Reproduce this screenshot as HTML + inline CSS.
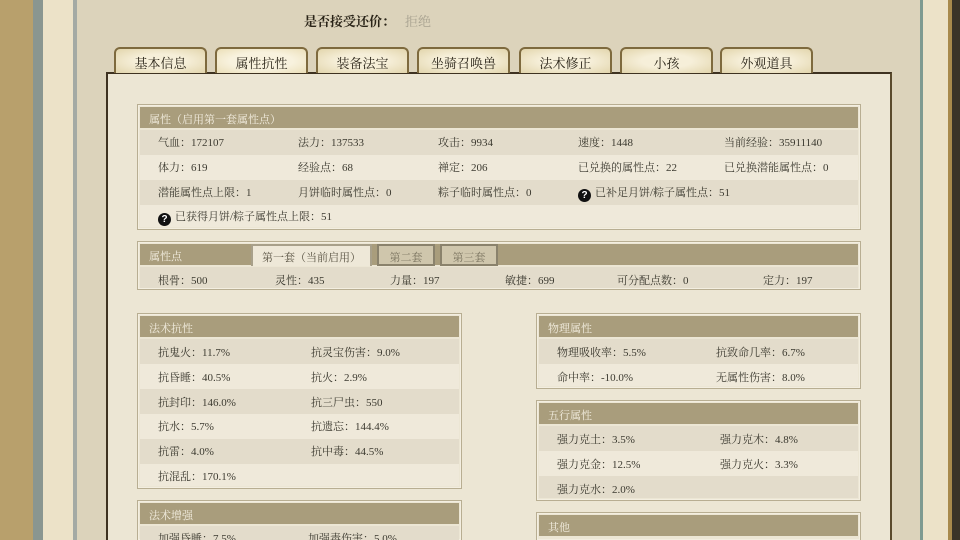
<!DOCTYPE html>
<html style="width:960px;height:540px;overflow:hidden"><head><meta charset="utf-8"><style>
*{margin:0;padding:0;box-sizing:border-box}
body{width:960px;height:540px;overflow:hidden;background:#dcd3bb;position:relative;font-family:"Liberation Serif","Noto Serif CJK SC",serif;font-size:11px;color:#3c3a30}
.a{position:absolute;white-space:nowrap}
.box{position:absolute;border:1px solid #b8ae92;background:#ece6d4;box-shadow:inset 0 0 0 1px #f3eee0}
.hd{position:absolute;left:2px;right:2px;top:2px;height:21px;background:#a99d7c;color:#f3eee0;font-size:11px;padding:4px 0 0 9px}
.row{position:absolute;left:2px;right:2px;height:25px}
.r1{background:#e3dccb}.r2{background:#efe9da}
.tab{position:absolute;top:47px;height:26px;width:93px;border:2px solid #7e6a3e;border-bottom:none;border-radius:6px 6px 0 0;background:radial-gradient(ellipse at center,#f6efd9 40%,#e2d5ac 100%);text-align:center;font-size:13px;padding-top:4px;color:#2a2418}
.tab.on{background:radial-gradient(ellipse at center,#f8f2de 50%,#ebdfb8 100%)}
.q{display:inline-block;width:13px;height:13px;border-radius:50%;background:#111;color:#fff;font-size:10px;text-align:center;line-height:13px;font-family:"Liberation Sans",sans-serif;font-weight:bold;vertical-align:-2px;margin-right:4px}
.st{position:absolute;top:244px;height:22px;border:2px solid #8a826c;background:#cfc6ac;color:#7b7460;font-size:11px;text-align:center;padding-top:3px}
</style></head><body>
<div class="a" style="left:0;top:0;width:33px;height:540px;background:#b8a06c"></div>
<div class="a" style="left:33px;top:0;width:10px;height:540px;background:#8a9690"></div>
<div class="a" style="left:43px;top:0;width:30px;height:540px;background:#ece2c8"></div>
<div class="a" style="left:73px;top:0;width:4px;height:540px;background:#a4aaa4"></div>
<div class="a" style="left:920px;top:0;width:3px;height:540px;background:#7e9a90"></div>
<div class="a" style="left:923px;top:0;width:25px;height:540px;background:#ece2c8"></div>
<div class="a" style="left:948px;top:0;width:4px;height:540px;background:#a88a4c"></div>
<div class="a" style="left:952px;top:0;width:8px;height:540px;background:#3a3428"></div>

<div class="a" style="left:304px;top:11px;font-size:13px;font-weight:bold;color:#2a2418">是否接受还价：</div>
<div class="a" style="left:405px;top:11px;font-size:13px;color:#a8a290">拒绝</div>

<div class="a" style="left:106px;top:72px;width:786px;height:468px;background:#ece6d4;border-left:2px solid #3e3220;border-top:2px solid #3e3220;border-right:2px solid #5a4a2c"></div>

<div class="tab" style="left:114px">基本信息</div>
<div class="tab on" style="left:215px">属性抗性</div>
<div class="tab" style="left:316px">装备法宝</div>
<div class="tab" style="left:417px">坐骑召唤兽</div>
<div class="tab" style="left:519px">法术修正</div>
<div class="tab" style="left:620px">小孩</div>
<div class="tab" style="left:720px">外观道具</div>

<div class="box" style="left:137px;top:104px;width:724px;height:126px">
<div class="hd">属性（启用第一套属性点）</div>
<div class="row r1" style="top:25px"></div><div class="row r2" style="top:50px"></div><div class="row r1" style="top:75px"></div><div class="row r2" style="top:100px;height:22px"></div>
</div>
<div class="a" style="left:158px;top:134px">气血：172107</div><div class="a" style="left:298px;top:134px">法力：137533</div><div class="a" style="left:438px;top:134px">攻击：9934</div><div class="a" style="left:578px;top:134px">速度：1448</div><div class="a" style="left:724px;top:134px">当前经验：35911140</div>
<div class="a" style="left:158px;top:159px">体力：619</div><div class="a" style="left:298px;top:159px">经验点：68</div><div class="a" style="left:438px;top:159px">禅定：206</div><div class="a" style="left:578px;top:159px">已兑换的属性点：22</div><div class="a" style="left:724px;top:159px">已兑换潜能属性点：0</div>
<div class="a" style="left:158px;top:184px">潜能属性点上限：1</div><div class="a" style="left:298px;top:184px">月饼临时属性点：0</div><div class="a" style="left:438px;top:184px">粽子临时属性点：0</div><div class="a" style="left:578px;top:184px"><span class="q">?</span>已补足月饼/粽子属性点：51</div>
<div class="a" style="left:158px;top:208px"><span class="q">?</span>已获得月饼/粽子属性点上限：51</div>

<div class="box" style="left:137px;top:241px;width:724px;height:49px">
<div class="hd">属性点</div>
<div class="row r1" style="top:25px;height:21px"></div>
</div>
<div class="st" style="left:251px;width:121px;background:#eee8d8;border-color:#a8a08a;border-bottom:none;color:#5a5444">第一套（当前启用）</div>
<div class="st" style="left:377px;width:58px">第二套</div>
<div class="st" style="left:440px;width:58px">第三套</div>
<div class="a" style="left:158px;top:272px">根骨：500</div><div class="a" style="left:275px;top:272px">灵性：435</div><div class="a" style="left:390px;top:272px">力量：197</div><div class="a" style="left:505px;top:272px">敏捷：699</div><div class="a" style="left:617px;top:272px">可分配点数：0</div><div class="a" style="left:763px;top:272px">定力：197</div>

<div class="box" style="left:137px;top:313px;width:325px;height:176px">
<div class="hd">法术抗性</div>
<div class="row r1" style="top:25px"></div><div class="row r2" style="top:50px"></div><div class="row r1" style="top:75px"></div><div class="row r2" style="top:100px"></div><div class="row r1" style="top:125px"></div><div class="row r2" style="top:150px;height:22px"></div>
</div>
<div class="a" style="left:158px;top:344px">抗鬼火：11.7%</div><div class="a" style="left:311px;top:344px">抗灵宝伤害：9.0%</div>
<div class="a" style="left:158px;top:369px">抗昏睡：40.5%</div><div class="a" style="left:311px;top:369px">抗火：2.9%</div>
<div class="a" style="left:158px;top:394px">抗封印：146.0%</div><div class="a" style="left:311px;top:394px">抗三尸虫：550</div>
<div class="a" style="left:158px;top:418px">抗水：5.7%</div><div class="a" style="left:311px;top:418px">抗遗忘：144.4%</div>
<div class="a" style="left:158px;top:443px">抗雷：4.0%</div><div class="a" style="left:311px;top:443px">抗中毒：44.5%</div>
<div class="a" style="left:158px;top:468px">抗混乱：170.1%</div>

<div class="box" style="left:137px;top:500px;width:325px;height:40px;border-bottom:none">
<div class="hd">法术增强</div>
<div class="row r1" style="top:25px"></div>
</div>
<div class="a" style="left:158px;top:530px">加强昏睡：7.5%</div><div class="a" style="left:308px;top:530px">加强毒伤害：5.0%</div>

<div class="box" style="left:536px;top:313px;width:325px;height:76px">
<div class="hd">物理属性</div>
<div class="row r1" style="top:25px"></div><div class="row r2" style="top:50px;height:22px"></div>
</div>
<div class="a" style="left:557px;top:344px">物理吸收率：5.5%</div><div class="a" style="left:716px;top:344px">抗致命几率：6.7%</div>
<div class="a" style="left:557px;top:369px">命中率：-10.0%</div><div class="a" style="left:716px;top:369px">无属性伤害：8.0%</div>

<div class="box" style="left:536px;top:400px;width:325px;height:101px">
<div class="hd">五行属性</div>
<div class="row r1" style="top:25px"></div><div class="row r2" style="top:50px"></div><div class="row r1" style="top:75px;height:22px"></div>
</div>
<div class="a" style="left:557px;top:431px">强力克土：3.5%</div><div class="a" style="left:720px;top:431px">强力克木：4.8%</div>
<div class="a" style="left:557px;top:456px">强力克金：12.5%</div><div class="a" style="left:720px;top:456px">强力克火：3.3%</div>
<div class="a" style="left:557px;top:481px">强力克水：2.0%</div>

<div class="box" style="left:536px;top:512px;width:325px;height:28px;border-bottom:none">
<div class="hd">其他</div>
</div>
</body></html>
